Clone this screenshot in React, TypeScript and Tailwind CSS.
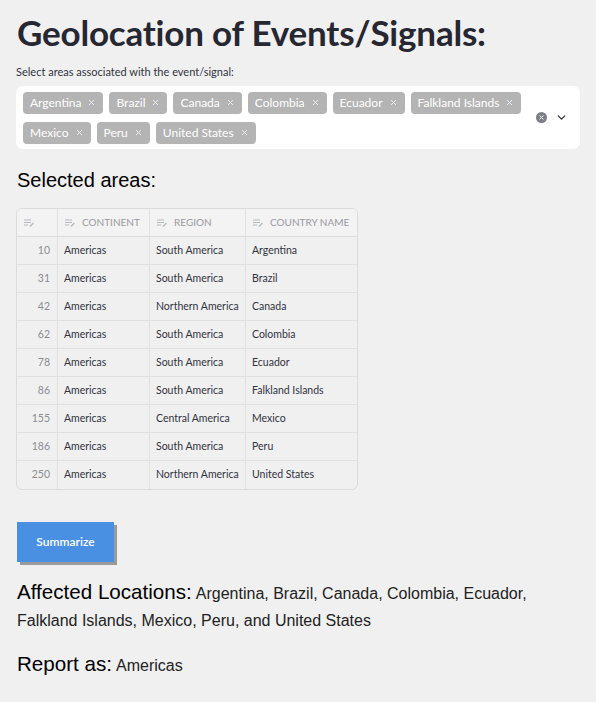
import { X, ChevronDown } from 'lucide-react';

const AREAS = [
  { id: 10, continent: 'Americas', region: 'South America', country: 'Argentina' },
  { id: 31, continent: 'Americas', region: 'South America', country: 'Brazil' },
  { id: 42, continent: 'Americas', region: 'Northern America', country: 'Canada' },
  { id: 62, continent: 'Americas', region: 'South America', country: 'Colombia' },
  { id: 78, continent: 'Americas', region: 'South America', country: 'Ecuador' },
  { id: 86, continent: 'Americas', region: 'South America', country: 'Falkland Islands' },
  { id: 155, continent: 'Americas', region: 'Central America', country: 'Mexico' },
  { id: 186, continent: 'Americas', region: 'South America', country: 'Peru' },
  { id: 250, continent: 'Americas', region: 'Northern America', country: 'United States' },
];

const sans = "font-['Lato','Source_Sans_Pro',sans-serif]";
const arial = "font-['Liberation_Sans',Arial,sans-serif]";

function EditIcon() {
  return (
    <svg width="11" height="8" viewBox="0 0 11 8" className="shrink-0 text-[#b8b8bc]">
      <path d="M0 1h7M0 3.5h7M0 6h4" stroke="currentColor" strokeWidth="1.2" />
      <path d="M6 7.5l3.5-3.5" stroke="currentColor" strokeWidth="1.4" />
    </svg>
  );
}

function Tag({ label }: Readonly<{ label: string }>) {
  return (
    <span className="flex items-center gap-[6px] h-[22px] pl-[7px] pr-[7px] rounded-[4px] bg-[#b4b4b4] text-white text-[12px]">
      {label}
      <X size={9} strokeWidth={2.5} className="opacity-80" />
    </span>
  );
}

export default function App() {
  return (
    <div className="min-h-[702px] bg-[#f0f0f0] px-[16px] pt-[10px]">
      <h1 className={`${sans} text-[35px] font-bold text-[#262730] leading-[44px] tracking-[-0.2px] ml-[1px]`}>
        Geolocation of Events/Signals:
      </h1>
      <p className={`${sans} text-[11px] text-[#31333f] mt-[11px] leading-[14px]`}>
        Select areas associated with the event/signal:
      </p>
      <div className={`${sans} mt-[7px] bg-white rounded-[7px] w-[564px] h-[63px] flex items-center pl-[7px] pr-[12px]`}>
        <div className="flex-1 flex flex-wrap gap-x-[6px] gap-y-[8px]">
          {['Argentina', 'Brazil', 'Canada', 'Colombia', 'Ecuador', 'Falkland Islands', 'Mexico', 'Peru', 'United States'].map(
            (c) => (
              <Tag key={c} label={c} />
            ),
          )}
        </div>
        <div className="flex items-center gap-[8px]">
          <span className="w-[11px] h-[11px] rounded-full bg-[#7d7d87] flex items-center justify-center">
            <X size={7} strokeWidth={3} className="text-white" />
          </span>
          <ChevronDown size={13} strokeWidth={2.5} className="text-[#31333f]" />
        </div>
      </div>

      <h2 className={`${arial} text-[20px] text-black mt-[17px] leading-[28px] ml-[1px]`}>Selected areas:</h2>

      <div className={`${sans} mt-[14px] w-[342px] border border-[#dcdcdc] rounded-[6px] overflow-hidden text-[10.5px]`}>
        <div className="flex h-[28px] bg-[#f3f3f3] border-b border-[#dcdcdc] text-[#9a9aa0] text-[10px]">
          <div className="w-[41px] border-r border-[#e0e0e0] flex items-center pl-[7px]">
            <EditIcon />
          </div>
          <div className="w-[92px] border-r border-[#e0e0e0] flex items-center gap-[6px] pl-[7px]">
            <EditIcon />
            CONTINENT
          </div>
          <div className="w-[96px] border-r border-[#e0e0e0] flex items-center gap-[6px] pl-[7px]">
            <EditIcon />
            REGION
          </div>
          <div className="flex-1 flex items-center gap-[6px] pl-[7px] whitespace-nowrap">
            <EditIcon />
            COUNTRY NAME
          </div>
        </div>
        {AREAS.map((a, i) => (
          <div
            key={a.id}
            className={`flex h-[28px] text-[#31333f] ${i < AREAS.length - 1 ? 'border-b border-[#e0e0e0]' : ''}`}
          >
            <div className="w-[41px] border-r border-[#e0e0e0] flex items-center justify-end pr-[7px] text-[#8c8c92]">
              {a.id}
            </div>
            <div className="w-[92px] border-r border-[#e0e0e0] flex items-center pl-[6px]">{a.continent}</div>
            <div className="w-[96px] border-r border-[#e0e0e0] flex items-center pl-[6px]">{a.region}</div>
            <div className="flex-1 flex items-center pl-[6px]">{a.country}</div>
          </div>
        ))}
      </div>

      <button
        className={`${sans} mt-[32px] ml-[1px] w-[97px] h-[40px] bg-[#4a90e2] text-white text-[12px] font-semibold shadow-[3px_3px_0_#9a9a9a]`}
      >
        Summarize
      </button>

      <p className={`${arial} mt-[16px] text-[16px] text-[#222] leading-[27px] ml-[1px] w-[540px]`}>
        <span className="text-[20.6px] text-black mr-[4px]">Affected Locations:</span>Argentina, Brazil, Canada, Colombia,
        Ecuador, Falkland Islands, Mexico, Peru, and United States
      </p>
      <p className={`${arial} mt-[16px] text-[16px] text-[#222] leading-[27px] ml-[1px]`}>
        <span className="text-[20.6px] text-black mr-[4px]">Report as:</span>Americas
      </p>
    </div>
  );
}
